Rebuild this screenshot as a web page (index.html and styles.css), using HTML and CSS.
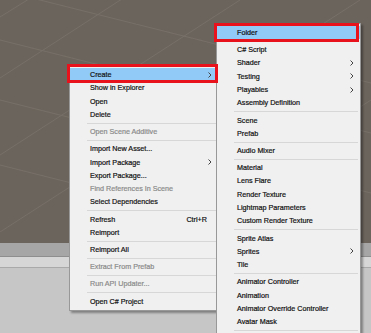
FILE: index.html
```html
<!DOCTYPE html>
<html lang="en">
  <head>
    <meta charset="UTF-8" />
    <meta name="viewport" content="width=device-width, initial-scale=1.0" />
    <title>Create Folder</title>
    <link rel="stylesheet" href="styles.css">
  </head>
  <body>
    <div class="screen">
      <div class="scene">
        <svg class="grid" width="371" height="243" viewBox="0 0 371 243">
          <g stroke="#777068" stroke-width="1" fill="none">
            <line x1="0" y1="17" x2="37" y2="-6" />
            <line x1="0" y1="78" x2="125" y2="-3" />
            <line x1="0" y1="155" x2="240" y2="0" />
            <line x1="0" y1="232" x2="360" y2="0" />
            <line x1="150" y1="243" x2="371" y2="100" />
            <line x1="0" y1="-10" x2="371" y2="83" />
            <line x1="0" y1="40" x2="371" y2="133" />
            <line x1="0" y1="100" x2="371" y2="193" />
            <line x1="0" y1="165" x2="330" y2="248" />
          </g>
        </svg>
      </div>
      <div class="toolbar"></div>
      <div class="tabs"></div>
      <div class="panel"></div>

      <div class="menu menu-main">
        <div class="item on">Create<span class="arrow"><svg width="4" height="6" viewBox="0 0 4 6"><path d="M0.5 0.5 L3 3 L0.5 5.5" stroke="#444" stroke-width="1" fill="none"/></svg></span></div>
        <div class="item">Show in Explorer</div>
        <div class="item">Open</div>
        <div class="item">Delete</div>
        <div class="sep"></div>
        <div class="item off">Open Scene Additive</div>
        <div class="sep"></div>
        <div class="item">Import New Asset...</div>
        <div class="item">Import Package<span class="arrow"><svg width="4" height="6" viewBox="0 0 4 6"><path d="M0.5 0.5 L3 3 L0.5 5.5" stroke="#444" stroke-width="1" fill="none"/></svg></span></div>
        <div class="item">Export Package...</div>
        <div class="item off">Find References In Scene</div>
        <div class="item">Select Dependencies</div>
        <div class="sep"></div>
        <div class="item">Refresh<span class="key">Ctrl+R</span></div>
        <div class="item">Reimport</div>
        <div class="sep"></div>
        <div class="item">Reimport All</div>
        <div class="sep"></div>
        <div class="item off">Extract From Prefab</div>
        <div class="sep"></div>
        <div class="item off">Run API Updater...</div>
        <div class="sep"></div>
        <div class="item">Open C# Project</div>
      </div>

      <div class="menu menu-create">
        <div class="item on">Folder</div>
        <div class="sep"></div>
        <div class="item">C# Script</div>
        <div class="item">Shader<span class="arrow"><svg width="4" height="6" viewBox="0 0 4 6"><path d="M0.5 0.5 L3 3 L0.5 5.5" stroke="#444" stroke-width="1" fill="none"/></svg></span></div>
        <div class="item">Testing<span class="arrow"><svg width="4" height="6" viewBox="0 0 4 6"><path d="M0.5 0.5 L3 3 L0.5 5.5" stroke="#444" stroke-width="1" fill="none"/></svg></span></div>
        <div class="item">Playables<span class="arrow"><svg width="4" height="6" viewBox="0 0 4 6"><path d="M0.5 0.5 L3 3 L0.5 5.5" stroke="#444" stroke-width="1" fill="none"/></svg></span></div>
        <div class="item">Assembly Definition</div>
        <div class="sep"></div>
        <div class="item">Scene</div>
        <div class="item">Prefab</div>
        <div class="sep"></div>
        <div class="item">Audio Mixer</div>
        <div class="sep"></div>
        <div class="item">Material</div>
        <div class="item">Lens Flare</div>
        <div class="item">Render Texture</div>
        <div class="item">Lightmap Parameters</div>
        <div class="item">Custom Render Texture</div>
        <div class="sep"></div>
        <div class="item">Sprite Atlas</div>
        <div class="item">Sprites<span class="arrow"><svg width="4" height="6" viewBox="0 0 4 6"><path d="M0.5 0.5 L3 3 L0.5 5.5" stroke="#444" stroke-width="1" fill="none"/></svg></span></div>
        <div class="item">Tile</div>
        <div class="sep"></div>
        <div class="item">Animator Controller</div>
        <div class="item">Animation</div>
        <div class="item">Animator Override Controller</div>
        <div class="item">Avatar Mask</div>
        <div class="sep"></div>
      </div>

      <div class="mark mark-create"></div>
      <div class="mark mark-folder"></div>
    </div>
  </body>
</html>
```

FILE: styles.css
```css
* {
  margin: 0;
  padding: 0;
  box-sizing: border-box;
}
body {
  width: 371px;
  height: 333px;
  overflow: hidden;
  background: #c6c6c6;
  font-family: "Liberation Sans", Arial, sans-serif;
}
.screen {
  position: relative;
  width: 371px;
  height: 333px;
  overflow: hidden;
  display: flex;
  flex-direction: column;
}
.scene {
  height: 243px;
  background: #6b645d;
  flex: none;
}
.grid {
  display: block;
}
.toolbar {
  height: 14px;
  background: #a6a6a6;
  border-bottom: 1px solid #8e8e8e;
  flex: none;
}
.tabs {
  height: 11px;
  background: #d6d6d6;
  border-bottom: 1px solid #a9a9a9;
  flex: none;
}
.panel {
  flex: 1;
  background: #c6c6c6;
}

/* context menus */
.menu {
  position: absolute;
  background: #f0f0f0;
  border: 1px solid #989898;
  padding: 2px 0;
  box-shadow: 2px 2px 2px rgba(0, 0, 0, 0.35);
  font-size: 7.2px;
  color: #111;
  -webkit-text-stroke: 0.2px;
  display: flex;
  flex-direction: column;
}
.menu-main {
  left: 69px;
  top: 65px;
  width: 150px;
}
.menu-create {
  left: 216px;
  top: 23px;
  width: 145px;
  height: 340px;
}
.item {
  height: 13.3px;
  line-height: 13.3px;
  padding-left: 20px;
  padding-right: 6px;
  display: flex;
  align-items: center;
  white-space: nowrap;
}
.item.on {
  background: #91c9f7;
}
.item.off {
  color: #8a8a8a;
}
.arrow {
  margin-left: auto;
  display: flex;
}
.key {
  margin-left: auto;
  padding-right: 5px;
}
.sep {
  height: 1px;
  background: #d7d7d7;
  margin: 1.45px 2px 1.45px 17px;
  flex: none;
}

/* red highlight boxes drawn over the screenshot */
.mark {
  position: absolute;
  border: 3px solid #e8121c;
}
.mark-create {
  left: 67px;
  top: 64px;
  width: 151px;
  height: 19px;
}
.mark-folder {
  left: 214px;
  top: 23px;
  width: 145px;
  height: 19px;
}
```
